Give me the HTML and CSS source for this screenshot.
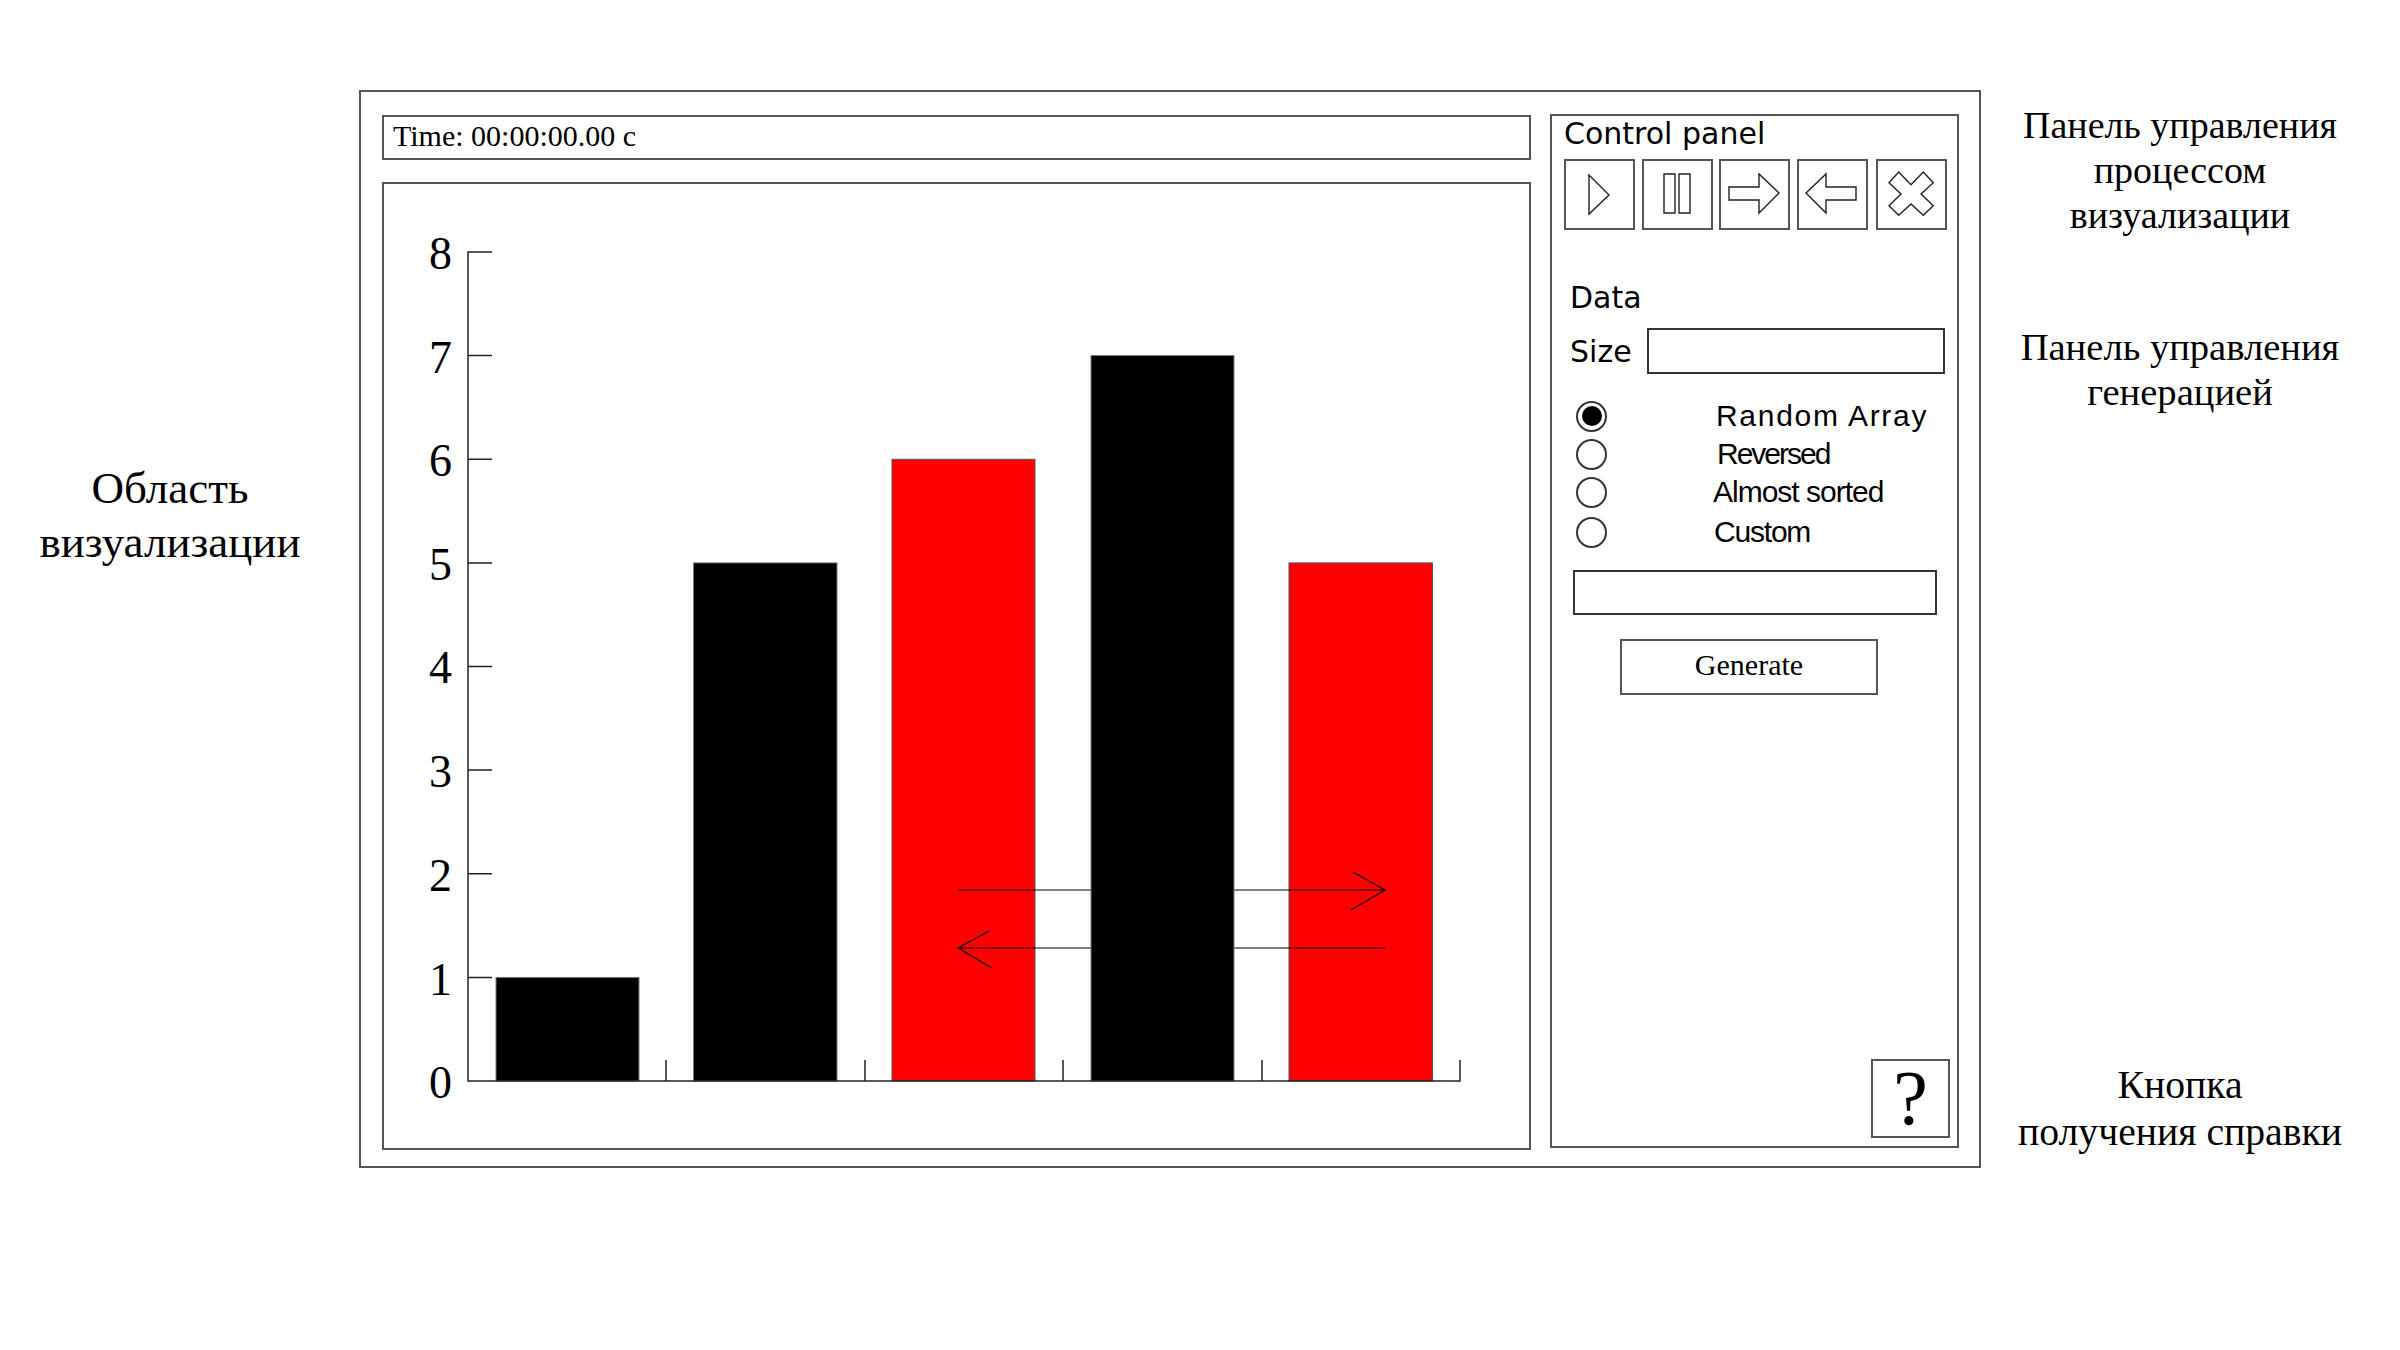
FILE: index.html
```html
<!DOCTYPE html>
<html lang="ru">

<head>
    <meta charset="UTF-8">
    <title>Область визуализации</title>
    <link rel="stylesheet" href="styles.css">
</head>

<body>
    <div class="page">
        <div class="note-left">Область<br>визуализации</div>

        <div class="frame">
            <div class="main">
                <div class="time">Time: 00:00:00.00 c</div>
                <div class="chart">
                    <svg width="1145" height="964" viewBox="0 0 1145 964">
                        <!-- red bars go under the arrows, black ones over them -->
                        <rect class="bar-red" x="508" y="275.3" width="143" height="621.7"></rect>
                        <rect class="bar-red" x="905" y="378.9" width="143.5" height="518.1"></rect>

                        <path class="line" d="M574 706H1001M969 688L1001 706L967 726"></path>
                        <path class="line" d="M1001 764H574M605 747L574 764L608 784"></path>

                        <rect class="bar-black" x="112" y="793.4" width="143" height="103.6"></rect>
                        <rect class="bar-black" x="309.5" y="378.9" width="143.5" height="518.1"></rect>
                        <rect class="bar-black" x="707" y="171.6" width="143" height="725.4"></rect>

                        <path class="axis" d="M108 68H84V897H1076V876"></path>
                        <path class="axis" d="M84 171.6H108M84 275.3H108M84 378.9H108M84 482.5H108M84 586.1H108M84 689.8H108M84 793.4H108"></path>
                        <path class="axis" d="M282 897V876M481 897V876M679 897V876M878 897V876"></path>

                        <text class="num" x="45" y="85">8</text>
                        <text class="num" x="45" y="188.6">7</text>
                        <text class="num" x="45" y="291.5">6</text>
                        <text class="num" x="45" y="395.9">5</text>
                        <text class="num" x="45" y="499">4</text>
                        <text class="num" x="45" y="602.5">3</text>
                        <text class="num" x="45" y="706.8">2</text>
                        <text class="num" x="45" y="811">1</text>
                        <text class="num" x="45" y="914">0</text>
                    </svg>
                </div>
            </div>

            <div class="panel">
                <div class="panel-title">Control panel</div>
                <div class="tools">
                    <div class="tool">
                        <svg width="67" height="67" viewBox="2 2 67 67"><path d="M25 16L45 36L25 55Z"></path></svg>
                    </div>
                    <div class="tool">
                        <svg width="67" height="67" viewBox="2 2 67 67"><path d="M22 15H33V54H22ZM37 15H48V54H37Z"></path></svg>
                    </div>
                    <div class="tool">
                        <svg width="67" height="67" viewBox="2 2 67 67"><path d="M10 28H40V15L60 34L40 54V41H10Z"></path></svg>
                    </div>
                    <div class="tool">
                        <svg width="67" height="67" viewBox="2 2 67 67"><path d="M59 28H29V15L9 34L29 54V41H59Z"></path></svg>
                    </div>
                    <div class="tool tool-close">
                        <svg width="67" height="67" viewBox="2 2 67 67"><path d="M35 25.7L22.7 13L13 23.7L25 35L13 46.7L22.7 56.3L35 45L47.3 56.3L57.3 46.7L45 35L57.3 23.7L47.3 13Z"></path></svg>
                    </div>
                </div>

                <div class="data-title">Data</div>
                <div class="size-row">
                    <span>Size</span>
                    <div class="field size-field"></div>
                </div>

                <div class="radios">
                    <div class="radio-row">
                        <span class="radio checked"></span>
                        <span class="radio-text text-random">Random Array</span>
                    </div>
                    <div class="radio-row">
                        <span class="radio"></span>
                        <span class="radio-text text-reversed">Reversed</span>
                    </div>
                    <div class="radio-row">
                        <span class="radio"></span>
                        <span class="radio-text text-almost">Almost sorted</span>
                    </div>
                    <div class="radio-row row-custom">
                        <span class="radio"></span>
                        <span class="radio-text text-custom">Custom</span>
                    </div>
                </div>

                <div class="field custom-field"></div>
                <div class="generate">Generate</div>
                <div class="help">?</div>
            </div>
        </div>

        <div class="notes-right">
            <div class="note note-process">Панель управления<br>процессом<br>визуализации</div>
            <div class="note note-generate">Панель управления<br>генерацией</div>
            <div class="note note-help">Кнопка<br>получения справки</div>
        </div>
    </div>
</body>

</html>
```

FILE: styles.css
```css
body,
html {
    margin: 0;
    padding: 0;
    background: #fff;
}

* {
    box-sizing: border-box;
}

.page {
    display: flex;
    width: 2400px;
    height: 1350px;
    padding-top: 90px;
    font-family: "Liberation Serif", serif;
    color: #000;
}

.note-left {
    width: 340px;
    margin-top: 371px;
    margin-right: 19px;
    font-size: 45px;
    line-height: 54px;
    text-align: center;
    white-space: nowrap;
}

.frame {
    display: flex;
    width: 1622px;
    height: 1078px;
    padding: 23px 20px 0 21px;
    border: 2px solid #555;
}

.main {
    width: 1149px;
    margin-right: 19px;
}

.time {
    height: 45px;
    padding-left: 9px;
    border: 2px solid #555;
    font-size: 30px;
    line-height: 38px;
}

.chart {
    height: 968px;
    margin-top: 22px;
    border: 2px solid #555;
}

.chart svg {
    display: block;
}

.bar-red {
    fill: #f00;
    stroke: #555;
    stroke-width: 1;
}

.bar-black {
    fill: #000;
    stroke: #777;
    stroke-width: 1;
}

.line {
    fill: none;
    stroke: #000;
    stroke-width: 1.2;
}

.axis {
    fill: none;
    stroke: #222;
    stroke-width: 1.5;
}

.num {
    font-family: "Liberation Serif", serif;
    font-size: 46px;
}

.panel {
    display: flex;
    flex-direction: column;
    width: 409px;
    height: 1034px;
    margin-top: -1px;
    padding-bottom: 8px;
    border: 2px solid #555;
    font-family: "DejaVu Sans", sans-serif;
    font-size: 30px;
}

.panel-title {
    height: 43px;
    padding-left: 12px;
    line-height: 36px;
}

.tools {
    display: flex;
    gap: 6.5px;
    margin-left: 12px;
}

.tool {
    width: 71px;
    height: 71px;
    border: 2px solid #555;
}

.tool svg {
    display: block;
}

.tool path {
    fill: #fff;
    stroke: #222;
    stroke-width: 1.4;
}

.tool-close {
    margin-left: 2px;
}

.data-title {
    height: 40px;
    margin-top: 48px;
    padding-left: 18px;
    line-height: 40px;
}

.size-row {
    display: flex;
    align-items: center;
    height: 46px;
    margin-top: 10px;
    padding-left: 18px;
}

.field {
    border: 2px solid #333;
}

.size-field {
    width: 298px;
    height: 46px;
    margin-left: 15px;
}

.radios {
    margin-top: 23px;
    margin-left: 24px;
    font-family: "Liberation Sans", sans-serif;
    font-size: 30px;
}

.radio-row {
    display: flex;
    align-items: center;
    height: 38px;
}

.row-custom {
    margin-top: 2px;
}

.radio {
    flex: none;
    display: flex;
    align-items: center;
    justify-content: center;
    width: 31px;
    height: 31px;
    border: 2px solid #333;
    border-radius: 50%;
}

.checked::after {
    content: '';
    width: 20px;
    height: 20px;
    background: #000;
    border-radius: 50%;
}

.radio-text {
    white-space: nowrap;
}

.text-random {
    margin-left: 109px;
    letter-spacing: 1.7px;
}

.text-reversed {
    margin-left: 110px;
    letter-spacing: -2px;
}

.text-almost {
    margin-left: 106px;
    letter-spacing: -1px;
}

.text-custom {
    margin-left: 107px;
    letter-spacing: -1.2px;
}

.custom-field {
    width: 364px;
    height: 45px;
    margin-top: 19px;
    margin-left: 21px;
}

.generate {
    width: 258px;
    height: 56px;
    margin-top: 24px;
    margin-left: 68px;
    border: 2px solid #555;
    font-family: "Liberation Serif", serif;
    font-size: 30px;
    line-height: 48px;
    text-align: center;
}

.help {
    align-self: flex-end;
    width: 79px;
    height: 79px;
    margin-top: auto;
    margin-right: 7px;
    border: 2px solid #555;
    font-family: "Liberation Serif", serif;
    font-size: 78px;
    line-height: 74px;
    text-align: center;
}

.notes-right {
    display: flex;
    flex-direction: column;
    width: 400px;
    margin-left: -1px;
}

.note {
    font-size: 38px;
    line-height: 45px;
    text-align: center;
    white-space: nowrap;
}

.note-process {
    margin-top: 13px;
}

.note-generate {
    margin-top: 87px;
    font-size: 38.6px;
}

.note-help {
    margin-top: 647px;
    font-size: 39.7px;
    line-height: 47px;
}
```
